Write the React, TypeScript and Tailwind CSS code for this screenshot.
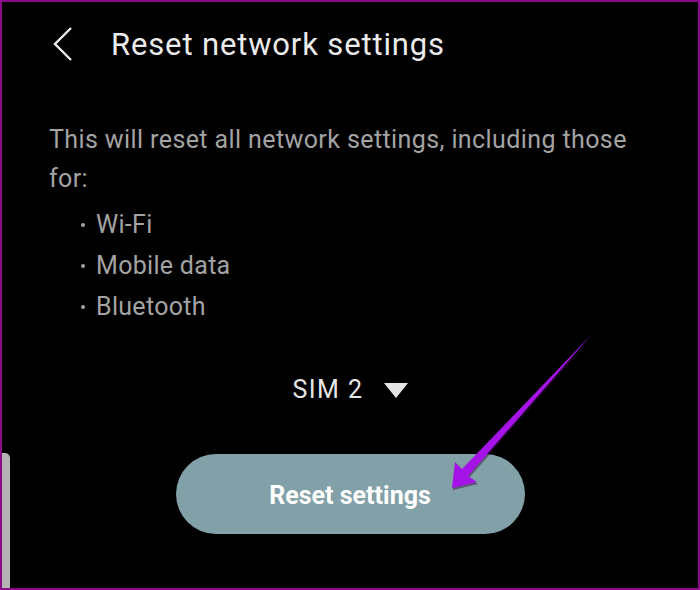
import React from "react";

export default function App() {
  return (
    <div
      className="relative w-[700px] h-[590px] box-border overflow-hidden bg-black border-2 border-[#8b0a8b]"
      style={{ fontFamily: "Roboto, 'Noto Sans', sans-serif" }}
    >
      {/* header */}
      <div className="h-[86px] flex items-center">
        <svg width="24" height="36" viewBox="0 0 24 36" className="ml-[50px]">
          <polyline points="19,1 3,17 19,33" fill="none" stroke="#ececec" strokeWidth="2.4" />
        </svg>
        <div className="ml-[35px] text-[31px] leading-[36px] text-[#ebebeb] font-normal tracking-[0.85px]">
          Reset network settings
        </div>
      </div>

      {/* description */}
      <p className="mt-[32px] ml-[47px] w-[600px] text-[25px] leading-[39px] tracking-[0.4px] text-[#a3a3a3]">
        This will reset all network settings, including those for:
      </p>

      <ul className="mt-[6px] ml-[79px] text-[25px] leading-[41px] tracking-[0.3px] text-[#a3a3a3]">
        <li className="flex items-center">
          <span className="w-[4px] h-[4px] rounded-full bg-[#a3a3a3] mr-[11px]" />
          <span>Wi-Fi</span>
        </li>
        <li className="flex items-center">
          <span className="w-[4px] h-[4px] rounded-full bg-[#a3a3a3] mr-[11px]" />
          <span>Mobile data</span>
        </li>
        <li className="flex items-center">
          <span className="w-[4px] h-[4px] rounded-full bg-[#a3a3a3] mr-[11px]" />
          <span>Bluetooth</span>
        </li>
      </ul>

      {/* SIM selector */}
      <div className="mt-[48px] h-[30px] flex items-center justify-center">
        <span className="text-[25px] leading-[30px] tracking-[1.5px] text-[#e6e6e6]">SIM 2</span>
        <svg width="24" height="15" viewBox="0 0 24 15" className="ml-[20px]">
          <polygon points="0,0 24,0 12,15" fill="#e4e4e4" />
        </svg>
      </div>

      {/* button */}
      <div className="mt-[49px] flex justify-center">
        <div className="w-[349px] h-[80px] rounded-full bg-[#82a0a8] flex items-center justify-center pt-[3px]">
          <span className="text-[25px] font-bold text-white">Reset settings</span>
        </div>
      </div>

      {/* left edge bar */}
      <div className="absolute left-0 top-[451px] w-[8px] h-[140px] bg-[#b3b3b3] rounded-tr-[5px]" />

      {/* annotation arrow */}
      <svg
        className="absolute left-[-2px] top-[-2px] pointer-events-none"
        width="700"
        height="590"
        viewBox="0 0 700 590"
      >
        <polygon
          points="452,488 455,462 462,469 591,335 468,476 477,482"
          fill="#3a0a4a"
          opacity="0.5"
          transform="translate(1,2)"
        />
        <polygon points="452,488 455,462 462,469 591,335 468,476 477,482" fill="#a513e8" />
      </svg>
    </div>
  );
}
